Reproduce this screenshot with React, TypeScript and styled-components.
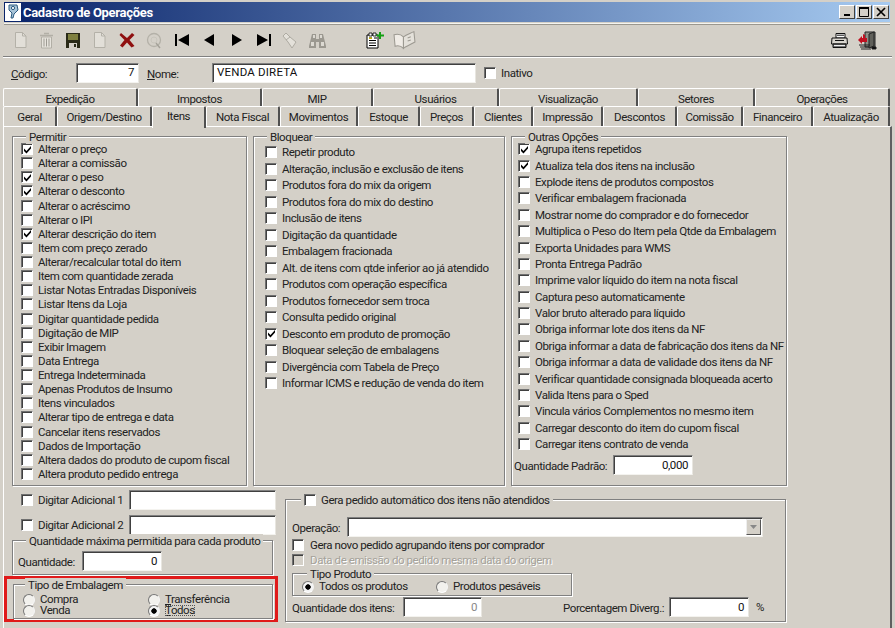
import React from "react";
import styled, { createGlobalStyle } from "styled-components";

const Global = createGlobalStyle`
  html, body { margin: 0; padding: 0; background: #d4d0c8; }
  #root { width: 895px; height: 628px; overflow: hidden; }
  * { box-sizing: border-box; }
`;

const Win = styled.div`
  width: 895px; height: 628px; overflow: hidden; background: #d4d0c8;
  font: 11.5px/14px "Roboto", "Liberation Sans", sans-serif; letter-spacing: -0.42px; color: #222;
  padding-top: 2px;
`;
const TitleBar = styled.div`
  height: 20px; margin: 0 5px 0 4px; display: flex; align-items: center;
  background: linear-gradient(90deg, #0a246a 0%, #a6caf0 100%);
  padding: 0 1px 0 1px; box-shadow: 0 1px 0 #d4d0c8, 0 2px 0 #f4f4f0, 0 3px 0 #9a978f;
`;
const AppIcon = styled.svg`width: 16px; height: 18px; flex: none; margin-right: 2px;`;
const Title = styled.div`
  flex: 1; color: #fff; font: bold 13px "Roboto", sans-serif; letter-spacing: -0.3px; white-space: nowrap;
`;
const WinBtn = styled.div`
  width: 16px; height: 14px; margin-left: 1px; background: #d4d0c8;
  border: 1px solid; border-color: #fff #404040 #404040 #fff;
  display: flex; align-items: center; justify-content: center;
`;
const Toolbar = styled.div`
  height: 33px; margin: 2px 3px 0; padding-left: 4px; display: flex; align-items: center;
  border-bottom: 1px solid #808080; box-shadow: 0 1px 0 #fff;
`;
const Slot = styled.div<{ $w: number }>`
  width: ${p => p.$w}px; flex: none; display: flex; justify-content: center; align-items: center;
`;
const Spring = styled.div`flex: 1;`;
const CodeRow = styled.div`
  height: 22px; margin-top: 5px; display: flex; align-items: center; padding-left: 11px;
`;
const Label = styled.span<{ $w?: number }>`
  ${p => p.$w ? `width: ${p.$w}px; flex: none;` : ""} white-space: nowrap; padding-top: 2px;
`;
const U = styled.span`text-decoration: underline;`;
const Field = styled.div<{ $w: number; $h?: number; $dim?: boolean }>`
  width: ${p => p.$w}px; height: ${p => p.$h ?? 20}px; flex: none; background: #fff;
  border: 1px solid; border-color: #808080 #e8e6e0 #f4f3ef #808080;
  box-shadow: inset 1px 1px 0 #404040;
  padding: 0 4px 0 4px; color: ${p => p.$dim ? "#888" : "#111"};
  display: flex; justify-content: flex-end; align-items: center; white-space: nowrap;
`;
const TextField = styled(Field)`justify-content: flex-start;`;
const NameField = styled(TextField)`letter-spacing: 0.2px; padding-bottom: 2px;`;
const CodeField = styled(Field)`padding-bottom: 2px;`;
const CheckBox = styled.span<{ $disabled?: boolean }>`
  width: 12px; height: 12px; flex: none; display: inline-flex; align-items: center; justify-content: center;
  background: ${p => p.$disabled ? "#d4d0c8" : "#fff"};
  border: 1px solid; border-color: #707070 #fff #fff #707070;
  box-shadow: inset 1px 1px 0 #404040;
`;
const CheckLine = styled.label<{ $disabled?: boolean; $gap?: number }>`
  display: flex; align-items: center; gap: ${p => p.$gap ?? 5}px; white-space: nowrap;
  ${p => p.$disabled ? "color: #a5a29a; text-shadow: 1px 1px 0 #fff;" : ""}
`;
const TabRows = styled.div`margin-top: 4px; padding-left: 3px;`;
const TabRow = styled.div<{ $h: number }>`display: flex; height: ${p => p.$h}px; align-items: flex-end;`;
const Tab = styled.div<{ $w: number; $h: number; $active?: boolean }>`
  width: ${p => p.$w}px; height: ${p => p.$h}px; flex: none; text-align: center; white-space: nowrap;
  border-top: 1px solid #fff; border-left: 1px solid #fff;
  border-right: 2px solid #505050; border-radius: 2px 2px 0 0;
  position: relative;
  padding-top: ${p => p.$active ? 2 : 3}px;
  background: #d4d0c8;
  ${p => p.$active ? "z-index: 2; margin-bottom: -2px;" : ""}
`;
const Panel = styled.div`
  width: 889px; height: 520px; margin-left: 3px; padding: 9px 0 0 8px;
  border-top: 1px solid #fff; border-left: 1px solid #fff; border-right: 2px solid #606060;
`;
const Columns = styled.div`display: flex; gap: 6px;`;
const Group = styled.div<{ $w: number; $h: number; $pl: number; $pt: number; $row?: number }>`
  position: relative; width: ${p => p.$w}px; height: ${p => p.$h}px; flex: none;
  border: 1px solid #808080; box-shadow: 1px 1px 0 #fff, inset 1px 1px 0 #fff;
  padding: ${p => p.$pt}px 0 0 ${p => p.$pl}px;
  display: grid; align-content: start;
  ${p => p.$row ? `grid-auto-rows: ${p.$row}px; align-items: center;` : ""}
`;
const Legend = styled.div<{ $x: number }>`
  position: absolute; top: -7px; left: ${p => p.$x}px; padding: 0 3px; background: #d4d0c8;
  line-height: 14px; white-space: nowrap; display: flex; align-items: center; gap: 5px;
`;
const Bottom = styled.div`display: flex; margin-top: 4px;`;
const LeftCol = styled.div`width: 273px; flex: none;`;
const AddRow = styled.div`height: 25px; display: flex; align-items: flex-start; padding-left: 9px;`;
const AddLine = styled(CheckLine)`height: 20px; width: 108px; flex: none;`;
const InlineRow = styled.div<{ $mt?: number }>`
  display: flex; align-items: center; margin-top: ${p => p.$mt ?? 0}px; white-space: nowrap;
`;
const RedFrame = styled.div`
  width: 274px; height: 46px; margin: 1px 0 0 -8px; border: 3px solid #e01a1a; padding: 5px 0 0 6px;
`;
const RadioGrid = styled.div<{ $cols: string }>`
  display: grid; grid-template-columns: ${p => p.$cols}; grid-auto-rows: 11px; align-items: center; line-height: 11px;
`;
const RadioLine = styled.span`display: flex; align-items: center; gap: 5px; white-space: nowrap;`;
const RadioDot = styled.span<{ $on?: boolean }>`
  width: 12px; height: 12px; flex: none; border-radius: 50%;
  background: ${p => p.$on ? "radial-gradient(circle at 50% 50%, #000 0 2.4px, #f4f4f4 3px)" : "#f2f1ed"};
  border: 1px solid; border-color: #777 #f4f4f4 #fff #777;
`;
const FocusText = styled.span`outline: 1px dotted #555; outline-offset: -1px;`;
const RightCol = styled.div`margin-top: 9px; flex: none;`;
const Combo = styled(TextField)`justify-content: flex-end; padding: 0 1px 0 0;`;
const ComboBtn = styled.span`
  width: 15px; height: 16px; background: #d4d0c8; border: 1px solid; border-color: #eee #555 #555 #eee;
  display: flex; align-items: center; justify-content: center;
`;
const StackLine = styled.div<{ $h: number }>`height: ${p => p.$h}px; display: flex; align-items: center;`;
const Percent = styled.span`margin-left: 7px;`;

const Tri = ({ dir }: { dir: "l" | "r" }) => (
  <svg width="14" height="14" viewBox="0 0 14 14">
    <path d={dir === "l" ? "M12 1L2 7L12 13Z" : "M2 1L12 7L2 13Z"} fill="#000" />
  </svg>
);
const Edge = ({ dir }: { dir: "l" | "r" }) => (
  <svg width="16" height="14" viewBox="0 0 16 14">
    {dir === "l"
      ? <path d="M1 1H3V13H1ZM15 1L4 7L15 13Z" fill="#000" />
      : <path d="M13 1H15V13H13ZM1 1L12 7L1 13Z" fill="#000" />}
  </svg>
);
const Doc = () => (
  <svg width="13" height="16" viewBox="0 0 13 16">
    <path d="M1.5 .5H8.5L12 4V15.5H1.5Z" fill="#e2dfd8" stroke="#b4b1a8" />
    <path d="M8.5 .5V4H12" fill="none" stroke="#b4b1a8" />
  </svg>
);
const Trash = () => (
  <svg width="15" height="17" viewBox="0 0 15 17">
    <path d="M5 1.5H10M1 3.5H14" stroke="#b2afa6" strokeWidth="1.4" />
    <path d="M2.5 5H12.5V16H2.5Z" fill="#e6e3dc" stroke="#b2afa6" />
    <path d="M5 6.5V14.5M7.5 6.5V14.5M10 6.5V14.5" stroke="#9d9a92" />
  </svg>
);
const Save = () => (
  <svg width="14" height="15" viewBox="0 0 14 15">
    <path d="M0 0H14V15H0Z" fill="#2a2a18" />
    <path d="M2 1H12V7H2Z" fill="#7f8040" />
    <path d="M3 10H11V15H3Z" fill="#d4d0c8" />
    <path d="M8 11H10V14H8Z" fill="#2a2a18" />
  </svg>
);
const RedX = () => (
  <svg width="16" height="16" viewBox="0 0 16 16">
    <path d="M2 1L8 6L13 1L15.5 3L10.5 8L15.5 14L12.5 15.5L8 10.5L3.5 15.5L1 13.5L5.5 8L.5 3Z" fill="#8f1010" />
  </svg>
);
const Query = () => (
  <svg width="17" height="17" viewBox="0 0 17 17" fill="none">
    <circle cx="8" cy="8" r="6.5" stroke="#b4b1a8" strokeWidth="1.3" />
    <circle cx="8" cy="8" r="3" stroke="#c8c5bc" />
    <path d="M10 11L14 16" stroke="#a4a198" strokeWidth="1.4" />
  </svg>
);
const Flash = () => (
  <svg width="15" height="17" viewBox="0 0 15 17" fill="none">
    <path d="M1 4L4 1L8 5L14 10L10 16L6 10Z" fill="#e4e1da" stroke="#aeaba2" />
    <path d="M4 8L8 5" stroke="#aeaba2" />
  </svg>
);
const Binoc = () => (
  <svg width="17" height="15" viewBox="0 0 17 15">
    <path d="M3 1H7V6H10V1H14L17 13V15H10V9H7V15H0V13Z" fill="#9b9890" />
    <path d="M2 9H5V13H2ZM12 9H15V13H12ZM4 2H6V5H4ZM11 2H13V5H11Z" fill="#dcd9d2" />
  </svg>
);
const Report = () => (
  <svg width="18" height="17" viewBox="0 0 18 17">
    <path d="M1 3H12V16H1Z" fill="#fff" stroke="#000" />
    <path d="M3 1H6V4H3ZM7 1H10V4H7Z" fill="#fff" stroke="#000" strokeWidth=".8" />
    <path d="M3 6H6M8 6H11M3 8.5H10M3 11H10M3 13.5H10" stroke="#000" />
    <path d="M3 5.5H6V7H3Z" fill="#c9b400" />
    <path d="M13 0H15V2.5H18V4.5H15V7H13V4.5H10.5V2.5H13Z" fill="#14a014" />
  </svg>
);
const Book = () => (
  <svg width="23" height="19" viewBox="0 0 22 17">
    <path d="M1 3C5 2 8 3 10 5V16C8 14 5 13 2 14Z" fill="#f0ece6" stroke="#9c9991" />
    <path d="M10 5C13 3 16 2 20 0L21 10C17 12 13 14 10 16Z" fill="#e4e1da" stroke="#9c9991" />
    <path d="M14 6L17 5M14 9L17 8" stroke="#9c9991" />
  </svg>
);
const Printer = () => (
  <svg width="17" height="15" viewBox="0 0 17 15">
    <path d="M5 .5H14V5H5Z" fill="#fff" stroke="#111" />
    <path d="M1 5H16L16.5 11H.5Z" fill="#d8d5ce" stroke="#111" />
    <path d="M2 11H15V14.5H2Z" fill="#777" stroke="#111" />
    <path d="M6 2.2H13M4 7.5H13" stroke="#111" />
    <path d="M3 12.5H14" stroke="#eee" />
  </svg>
);
const Door = () => (
  <svg width="19" height="19" viewBox="0 0 19 19">
    <path d="M7 1H17V16H7Z" fill="#909088" stroke="#222" />
    <path d="M11 3L16 1V15L11 17Z" fill="#60605a" stroke="#222" />
    <path d="M0 9L4 5V7H9V11H4V13Z" fill="#c01020" />
    <path d="M5 3L7 4V7H5Z" fill="#c01020" />
    <path d="M1 14H12M2 16H11M3 18H13M14 16H18V18H14Z" stroke="#222" />
  </svg>
);
const Tick = () => (
  <svg width="9" height="9" viewBox="0 0 9 9">
    <path d="M1 3.5L3.5 6L8 1V3.5L3.5 8.5L1 6Z" fill="#000" />
  </svg>
);
const Check = ({ on, disabled }: { on?: boolean; disabled?: boolean }) => (
  <CheckBox $disabled={disabled}>{on ? <Tick /> : null}</CheckBox>
);

const tabs1: [string, number][] = [["Expedição", 135], ["Impostos", 124], ["MIP", 111], ["Usuários", 126], ["Visualização", 139], ["Setores", 117], ["Operações", 135]];
const tabs2: [string, number][] = [["Geral", 54], ["Origem/Destino", 95], ["Itens", 54], ["Nota Fiscal", 74], ["Movimentos", 78], ["Estoque", 62], ["Preços", 54], ["Clientes", 59], ["Impressão", 70], ["Descontos", 74], ["Comissão", 66], ["Financeiro", 70], ["Atualização", 77]];

const permitir: [string, boolean?][] = [
  ["Alterar o preço", true], ["Alterar a comissão"], ["Alterar o peso", true], ["Alterar o desconto", true],
  ["Alterar o acréscimo"], ["Alterar o IPI"], ["Alterar descrição do item", true], ["Item com preço zerado"],
  ["Alterar/recalcular total do item"], ["Item com quantidade zerada"], ["Listar Notas Entradas Disponíveis"],
  ["Listar Itens da Loja"], ["Digitar quantidade pedida"], ["Digitação de MIP"], ["Exibir Imagem"], ["Data Entrega"],
  ["Entrega Indeterminada"], ["Apenas Produtos de Insumo"], ["Itens vinculados"], ["Alterar tipo de entrega e data"],
  ["Cancelar itens reservados"], ["Dados de Importação"], ["Altera dados do produto de cupom fiscal"], ["Altera produto pedido entrega"],
];
const bloquear: [string, boolean?][] = [
  ["Repetir produto"], ["Alteração, inclusão e exclusão de itens"], ["Produtos fora do mix da origem"],
  ["Produtos fora do mix do destino"], ["Inclusão de itens"], ["Digitação da quantidade"], ["Embalagem fracionada"],
  ["Alt. de itens com qtde inferior ao já atendido"], ["Produtos com operação específica"], ["Produtos fornecedor sem troca"],
  ["Consulta pedido original"], ["Desconto em produto de promoção", true], ["Bloquear seleção de embalagens"],
  ["Divergência com Tabela de Preço"], ["Informar ICMS e redução de venda do item"],
];
const outras: [string, boolean?][] = [
  ["Agrupa itens repetidos", true], ["Atualiza tela dos itens na inclusão", true], ["Explode itens de produtos compostos"],
  ["Verificar embalagem fracionada"], ["Mostrar nome do comprador e do fornecedor"], ["Multiplica o Peso do Item pela Qtde da Embalagem"],
  ["Exporta Unidades para WMS"], ["Pronta Entrega Padrão"], ["Imprime valor líquido do item na nota fiscal"],
  ["Captura peso automaticamente"], ["Valor bruto alterado para líquido"], ["Obriga informar lote dos itens da NF"],
  ["Obriga informar a data de fabricação dos itens da NF"], ["Obriga informar a data de validade dos itens da NF"],
  ["Verificar quantidade consignada bloqueada acerto"], ["Valida Itens para o Sped"], ["Vincula vários Complementos no mesmo item"],
  ["Carregar desconto do item do cupom fiscal"], ["Carregar itens contrato de venda"],
];

const Lines = ({ items }: { items: [string, boolean?][] }) => (
  <>
    {items.map(([t, on]) => (
      <CheckLine key={t}><Check on={on} />{t}</CheckLine>
    ))}
  </>
);

export default function App() {
  return (
    <Win>
      <Global />
      <TitleBar>
        <AppIcon viewBox="0 0 16 18">
          <path d="M0 0H16V18H0Z" fill="#fff" />
          <path d="M4 2H12L13 7L9 11L8 15H6L7 10L4 7Z" fill="#a8c4d8" stroke="#2c5a80" />
          <circle cx="8" cy="5" r="1.6" fill="#fff" stroke="#2c5a80" />
        </AppIcon>
        <Title>Cadastro de Operações</Title>
        <WinBtn>
          <svg width="8" height="8" viewBox="0 0 8 8"><path d="M1 6H7V8H1Z" fill="#000" /></svg>
        </WinBtn>
        <WinBtn>
          <svg width="10" height="10" viewBox="0 0 10 10"><path d="M.5 1.5H9.5V9.5H.5Z" fill="none" stroke="#000" /><path d="M0 0H10V2H0Z" fill="#000" /></svg>
        </WinBtn>
        <WinBtn>
          <svg width="10" height="10" viewBox="0 0 10 10"><path d="M1 1L9 9M9 1L1 9" stroke="#000" strokeWidth="1.7" /></svg>
        </WinBtn>
      </TitleBar>
      <Toolbar>
        <Slot $w={26}><Doc /></Slot>
        <Slot $w={27}><Trash /></Slot>
        <Slot $w={26}><Save /></Slot>
        <Slot $w={26}><Doc /></Slot>
        <Slot $w={29}><RedX /></Slot>
        <Slot $w={26}><Query /></Slot>
        <Slot $w={29}><Edge dir="l" /></Slot>
        <Slot $w={26}><Tri dir="l" /></Slot>
        <Slot $w={29}><Tri dir="r" /></Slot>
        <Slot $w={26}><Edge dir="r" /></Slot>
        <Slot $w={25}><Flash /></Slot>
        <Slot $w={31}><Binoc /></Slot>
        <Slot $w={26} />
        <Slot $w={32}><Report /></Slot>
        <Slot $w={27}><Book /></Slot>
        <Spring />
        <Slot $w={28}><Printer /></Slot>
        <Slot $w={28}><Door /></Slot>
        <Slot $w={11} />
      </Toolbar>
      <CodeRow>
        <Label $w={65}><U>C</U>ódigo:</Label>
        <CodeField $w={63}>7</CodeField>
        <Label $w={65} style={{ marginLeft: 8 }}><U>N</U>ome:</Label>
        <NameField $w={264}>VENDA DIRETA</NameField>
        <CheckLine style={{ marginLeft: 8 }}><Check />Inativo</CheckLine>
      </CodeRow>
      <TabRows>
        <TabRow $h={18}>
          {tabs1.map(([t, w]) => <Tab key={t} $w={w} $h={18}>{t}</Tab>)}
        </TabRow>
        <TabRow $h={20}>
          {tabs2.map(([t, w]) => (
            <Tab key={t} $w={w} $h={t === "Itens" ? 22 : 20} $active={t === "Itens"}>{t}</Tab>
          ))}
        </TabRow>
      </TabRows>
      <Panel>
        <Columns>
          <Group $w={235} $h={350} $pl={8} $pt={5} $row={14.13}>
            <Legend $x={13}>Permitir</Legend>
            <Lines items={permitir} />
          </Group>
          <Group $w={252} $h={350} $pl={11} $pt={7} $row={16.5}>
            <Legend $x={13}>Bloquear</Legend>
            <Lines items={bloquear} />
          </Group>
          <Group $w={276} $h={350} $pl={6} $pt={4} $row={16.4}>
            <Legend $x={13}>Outras Opções</Legend>
            <Lines items={outras} />
            <InlineRow $mt={9}>
              <Label $w={99} style={{ marginLeft: -4 }}>Quantidade Padrão:</Label>
              <Field $w={80}>0,000</Field>
            </InlineRow>
          </Group>
        </Columns>
        <Bottom>
          <LeftCol>
            <AddRow>
              <AddLine><Check />Digitar Adicional 1</AddLine>
              <TextField $w={147} />
            </AddRow>
            <AddRow>
              <AddLine><Check />Digitar Adicional 2</AddLine>
              <TextField $w={147} />
            </AddRow>
            <Group $w={261} $h={35} $pl={5} $pt={10}>
              <Legend $x={13}>Quantidade máxima permitida para cada produto</Legend>
              <InlineRow>
                <Label $w={64}>Quantidade:</Label>
                <Field $w={80}>0</Field>
              </InlineRow>
            </Group>
            <RedFrame>
              <Group $w={260} $h={35} $pl={9} $pt={9}>
                <Legend $x={11}>Tipo de Embalagem</Legend>
                <RadioGrid $cols="125px 125px">
                  <RadioLine><RadioDot />Compra</RadioLine>
                  <RadioLine><RadioDot /><span><U>T</U>ransferência</span></RadioLine>
                  <RadioLine><RadioDot />Venda</RadioLine>
                  <RadioLine><RadioDot $on /><FocusText><U>T</U>odos</FocusText></RadioLine>
                </RadioGrid>
              </Group>
            </RedFrame>
          </LeftCol>
          <RightCol>
            <Group $w={501} $h={123} $pl={6} $pt={17}>
              <Legend $x={15}><Check />Gera pedido automático dos itens não atendidos</Legend>
              <InlineRow>
                <Label $w={55}>Operação:</Label>
                <Combo $w={416}><ComboBtn>
                  <svg width="7" height="4" viewBox="0 0 7 4"><path d="M0 0H7L3.5 4Z" fill="#888" /></svg>
                </ComboBtn></Combo>
              </InlineRow>
              <StackLine $h={15}>
                <CheckLine $gap={6}><Check />Gera novo pedido agrupando itens por comprador</CheckLine>
              </StackLine>
              <StackLine $h={15}>
                <CheckLine $gap={6} $disabled><Check disabled />Data de emissão do pedido mesma data do origem</CheckLine>
              </StackLine>
              <Group $w={280} $h={23} $pl={9} $pt={7} style={{ marginTop: 6 }}>
                <Legend $x={14}>Tipo Produto</Legend>
                <RadioGrid $cols="134px 135px">
                  <RadioLine><RadioDot $on />Todos os produtos</RadioLine>
                  <RadioLine><RadioDot />Produtos pesáveis</RadioLine>
                </RadioGrid>
              </Group>
              <InlineRow $mt={1}>
                <Label $w={111}>Quantidade dos itens:</Label>
                <Field $w={79} $dim>0</Field>
                <Label $w={81} />
                <Label $w={106}>Porcentagem Diverg.:</Label>
                <Field $w={80}>0</Field>
                <Percent>%</Percent>
              </InlineRow>
            </Group>
          </RightCol>
        </Bottom>
      </Panel>
    </Win>
  );
}
